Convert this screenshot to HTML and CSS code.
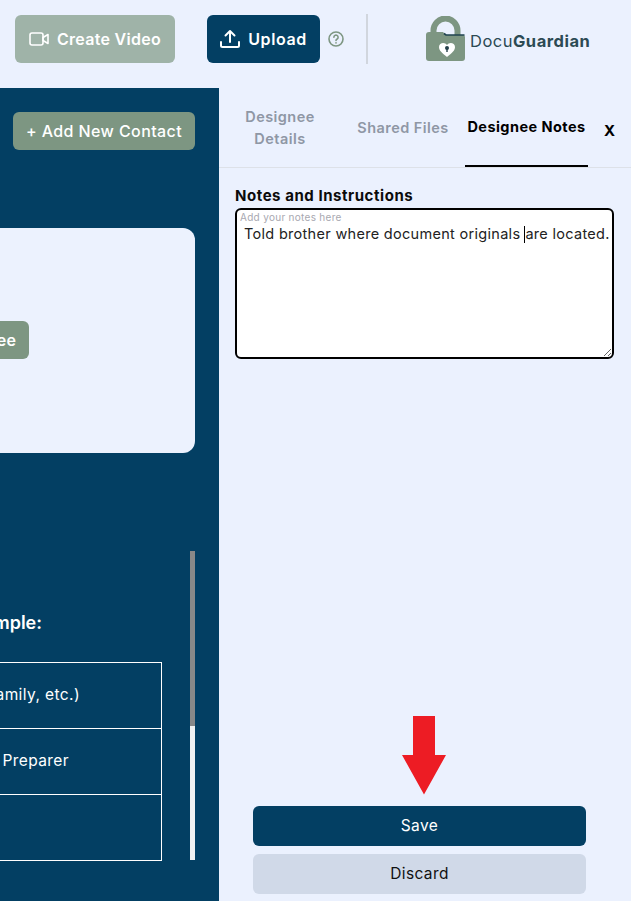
FILE: index.html
```html
<!DOCTYPE html>
<html lang="en">
<head>
    <meta charset="UTF-8">
    <meta name="viewport" content="width=device-width, initial-scale=1.0">
    <title>DocuGuardian - Designee Notes</title>
    <link rel="stylesheet" href="styles.css">
</head>
<body>
    <header class="topbar">
        <button class="btn-video" type="button">
            <svg class="btn-icon" width="20" height="16" viewBox="0 0 20 16" fill="none" stroke="currentColor" stroke-width="1.6" stroke-linejoin="round">
                <rect x="1" y="2" width="13" height="12" rx="2"/>
                <path d="M14 6.5l5-3v9l-5-3z"/>
            </svg>
            Create Video
        </button>
        <button class="btn-upload" type="button">
            <svg class="btn-icon" width="20" height="20" viewBox="0 0 20 20" fill="none" stroke="currentColor" stroke-width="2" stroke-linecap="round" stroke-linejoin="round">
                <path d="M10 13V2M5.5 6.5L10 2l4.500 4.500"/>
                <path d="M1 13v3.500A1.500 1.500 0 0 0 2.500 18h15a1.500 1.500 0 0 0 1.500-1.500V13"/>
            </svg>
            Upload
        </button>
        <svg class="help-icon" width="16" height="16" viewBox="0 0 16 16" fill="none" stroke="#7d9682" stroke-width="1.600" stroke-linecap="round">
            <circle cx="8" cy="8" r="7"/>
            <path d="M5.900 6.200a2.100 2.100 0 1 1 3.200 1.800c-.7.4-1.100.8-1.100 1.500"/>
            <path d="M8 11.800v.1"/>
        </svg>
        <div class="topbar-sep"></div>
        <div class="logo">
            <svg width="42" height="46" viewBox="0 0 42 46">
                <path d="M8.500 20V14.500A12 12 0 0 1 32.500 14.500V20" fill="none" stroke="#7d9682" stroke-width="6"/>
                <path d="M1 19Q1 16 4 16H18L21 19H38Q40 19 40 21V42Q40 45 37 45H4Q1 45 1 42Z" fill="#7d9682"/>
                <path d="M19 17.500L21 19H39.500" fill="none" stroke="#1f4350" stroke-width="1.600"/>
                <path d="M22 41C17 37 14 34.500 14 31C14 26.500 20 25.500 22 29C24 25.500 30 26.500 30 31C30 34.500 27 37 22 41Z" fill="#fff"/>
                <circle cx="22" cy="32" r="2" fill="#24404a"/>
                <path d="M22 32v4" stroke="#24404a" stroke-width="1.400"/>
            </svg>
            <span class="logo-text">Docu<b>Guardian</b></span>
        </div>
    </header>

    <div class="main">
        <aside class="contacts">
            <div class="contacts-top">
                <button class="btn-green" type="button">+ Add New Contact</button>
            </div>
            <div class="designee-card">
                <button class="btn-green btn-designee" type="button">Add Designee</button>
            </div>
            <div class="example">
                <div class="example-body">
                    <h3>For example:</h3>
                    <div class="example-table">
                        <div class="example-row row-family">(Spouse, Friend, Family, etc.)</div>
                        <div class="example-row row-preparer">Attorney or Tax Preparer</div>
                        <div class="example-row"></div>
                    </div>
                </div>
                <div class="scroll-track"><div class="scroll-thumb"></div></div>
            </div>
        </aside>

        <section class="panel">
            <nav class="tabs">
                <a class="tab tab-details">Designee Details</a>
                <a class="tab tab-files">Shared Files</a>
                <a class="tab tab-notes active">Designee Notes</a>
                <a class="tab-close">X</a>
            </nav>
            <div class="notes">
                <label class="notes-label">Notes and Instructions</label>
                <div class="notes-box">
                    <div class="notes-hint">Add your notes here</div>
                    <div class="notes-text">Told brother where document originals<span class="caret"></span>are located.</div>
                </div>
            </div>
            <div class="actions">
                <svg class="red-arrow" width="44" height="79" viewBox="0 0 44 79">
                    <path d="M11 0H33V39H44L22 78.500L0 39H11Z" fill="#ed1c24"/>
                </svg>
                <button class="btn-save" type="button">Save</button>
                <button class="btn-discard" type="button">Discard</button>
            </div>
        </section>
    </div>
</body>
</html>
```

FILE: styles.css
```css
* {
    box-sizing: border-box;
}
html, body {
    height: 100%;
}
body {
    margin: 0;
    overflow: hidden;
    background-color: #ebf1fe;
    font-family: Inter, "Liberation Sans", sans-serif;
    color: #0b0b0b;
    display: flex;
    flex-direction: column;
}
button {
    font-family: inherit;
    border: none;
    cursor: pointer;
}

/* top bar */
.topbar {
    height: 88px;
    flex: none;
    display: flex;
    align-items: center;
    padding: 0 0 10px 15px;
}
.btn-icon {
    flex: none;
}
.btn-video, .btn-upload {
    height: 48px;
    border-radius: 6px;
    color: #fff;
    font-size: 16px;
    font-weight: 600;
    letter-spacing: .3px;
    display: flex;
    align-items: center;
    justify-content: center;
    gap: 8px;
    padding-bottom: 2px;
}
.btn-video {
    width: 160px;
    background-color: #9fb3a8;
    margin-right: 32px;
}
.btn-upload {
    width: 113px;
    background-color: #033f63;
    margin-right: 8px;
    letter-spacing: .6px;
}
.help-icon {
    flex: none;
}
.topbar-sep {
    width: 2px;
    height: 50px;
    margin-left: 22px;
    background-color: #d1d6de;
}
.logo {
    margin-left: 57px;
    display: flex;
    align-items: center;
    gap: 3px;
}
.logo-text {
    font-size: 16.5px;
    letter-spacing: .5px;
    color: #2c4a54;
    margin-top: 4px;
}
.logo-text b {
    font-weight: 700;
}

.main {
    flex: 1;
    display: flex;
    min-height: 0;
}

/* left side, cut off by the window */
.contacts {
    width: 219px;
    flex: none;
    background-color: #033f63;
    overflow: hidden;
    display: flex;
    flex-direction: column;
    align-items: flex-end;
    padding: 24px 24px 0 0;
}
.btn-green {
    height: 38px;
    border-radius: 6px;
    background-color: #7d9682;
    color: #fff;
    font-size: 16px;
    font-weight: 500;
    letter-spacing: .4px;
    white-space: nowrap;
    flex: none;
}
.contacts-top .btn-green {
    width: 182px;
}
.designee-card {
    width: 400px;
    height: 225px;
    flex: none;
    margin-top: 78px;
    border-radius: 12px;
    background-color: #ecf2fe;
    display: flex;
    justify-content: flex-end;
    align-items: center;
    padding: 0 166px 1px 0;
}
.btn-designee {
    width: 138px;
    font-weight: 600;
}
.example {
    flex: none;
    margin-top: 98px;
    height: 309px;
    display: flex;
    justify-content: flex-end;
}
.example-body {
    width: 400px;
    flex: none;
    margin-right: 28px;
}
.example-body h3 {
    margin: 60px 0 27px;
    font-size: 18px;
    line-height: 24px;
    font-weight: 600;
    color: #fff;
    text-align: right;
    padding-right: 120px;
}
.example-table {
    border: 1px solid #fff;
}
.example-row {
    height: 66px;
    color: #fff;
    font-size: 15.5px;
    letter-spacing: .4px;
    display: flex;
    align-items: center;
    justify-content: flex-end;
    white-space: nowrap;
    padding-bottom: 2px;
}
.example-row:first-child {
    height: 65px;
}
.example-row + .example-row {
    border-top: 1px solid #fff;
}
.row-family {
    padding-right: 81px;
}
.row-preparer {
    padding-right: 92px;
}
.scroll-track {
    width: 5px;
    flex: none;
    background-color: #f1f1f1;
}
.scroll-thumb {
    height: 175px;
    background-color: #888;
}

/* designee panel */
.panel {
    flex: 1;
    min-width: 0;
    position: relative;
    display: flex;
    flex-direction: column;
}
.tabs {
    height: 80px;
    flex: none;
    display: flex;
    border-bottom: 1px solid #dde1e8;
    padding-left: 16px;
}
.tab {
    display: flex;
    align-items: center;
    justify-content: center;
    text-align: center;
    color: #8f97a5;
    font-size: 14.5px;
    font-weight: 600;
    letter-spacing: .45px;
    line-height: 22px;
    white-space: nowrap;
}
.tab-details {
    width: 90px;
    white-space: normal;
    margin-right: 33px;
}
.tab-files {
    width: 90px;
    margin-right: 17px;
}
.tab-notes {
    width: 123px;
    color: #000;
    font-weight: 700;
    border-bottom: 2px solid #000;
}
.tab-close {
    margin: 33px 0 0 16px;
    font-size: 15px;
    font-weight: 700;
    color: #000;
}
.notes {
    padding: 19px 17px 0 16px;
}
.notes-label {
    display: block;
    font-size: 15px;
    letter-spacing: .55px;
    line-height: 18px;
    font-weight: 700;
    margin-bottom: 3px;
}
.notes-box {
    height: 151px;
    border: 2px solid #000;
    border-radius: 6px;
    background-color: #fff;
    padding: 1px 3px;
    overflow: auto;
    resize: both;
}
.notes-hint {
    font-size: 10px;
    letter-spacing: .3px;
    line-height: 12px;
    color: #a8a8b0;
}
.notes-text {
    font-size: 14.5px;
    letter-spacing: .3px;
    line-height: 18px;
    margin-top: 2px;
    padding-left: 4px;
    color: #222;
    white-space: nowrap;
}
.caret {
    display: inline-block;
    width: 1px;
    height: 17px;
    margin: 0 0 0 4px;
    vertical-align: -4px;
    background-color: #000;
}
.actions {
    margin-top: auto;
    padding: 0 45px 7px 34px;
    display: flex;
    flex-direction: column;
    gap: 8px;
}
.red-arrow {
    position: absolute;
    left: 183px;
    bottom: 106px;
}
.btn-save, .btn-discard {
    height: 40px;
    border-radius: 6px;
    font-size: 15.5px;
    letter-spacing: .4px;
    padding-bottom: 2px;
}
.btn-save {
    background-color: #033f63;
    color: #fff;
}
.btn-discard {
    background-color: #d0d9e8;
    color: #111;
}
```
